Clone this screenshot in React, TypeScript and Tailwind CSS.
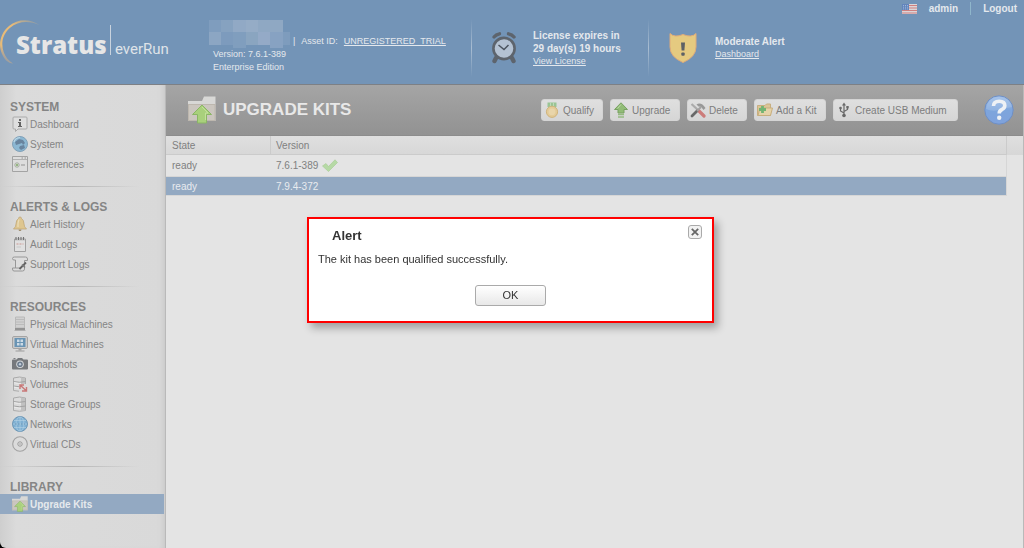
import React, { useState } from 'react';
import clsx from 'clsx';

type IconProps = { className?: string };

/* ---------- header art ---------- */

const Logo = () => (
  <div className="relative flex h-[50px] w-[200px] shrink-0 items-start">
    <svg className="absolute left-0 top-0" width="44" height="50" viewBox="0 0 44 50" fill="none" aria-hidden="true">
      <defs>
        <linearGradient id="arc" x1="0.9" y1="0" x2="0.2" y2="1">
          <stop offset="0" stopColor="#e3b878" stopOpacity="0.2" />
          <stop offset="0.35" stopColor="#e8bb78" />
          <stop offset="0.8" stopColor="#e8bb78" />
          <stop offset="1" stopColor="#d8ac80" stopOpacity="0.3" />
        </linearGradient>
      </defs>
      <path d="M39.5 6 C30 -0.5 18 -0.5 9 7 C0 14.500 -2 26 2 35 C4 40 8 44.500 13 44.500 C8.500 42 5.500 38 3.800 33.500 C0.800 25 2 16 9.800 9 C18 2 29 1.500 39.500 6Z" fill="url(#arc)" />
    </svg>
    <span className="ml-4 mt-[10px] w-[90px] whitespace-nowrap font-['Open_Sans'] text-[24px] font-extrabold leading-[32px] text-[#e6e6e6]">
      Stratus
    </span>
    <span className="mx-[4px] mt-[6px] h-[30px] w-px bg-[#c9d3de]" />
    <span className="mt-[18px] whitespace-nowrap font-['Roboto'] text-[15px] leading-[24px] text-[#dfe3e8]">everRun</span>
  </div>
);

const Mosaic = () => (
  <svg width="81" height="28" viewBox="0 0 81 28" shapeRendering="crispEdges" aria-hidden="true">
    <path d="M0 0H12V12H0z" fill="#7f9dbe" />
    <path d="M12 0H24V12H12z" fill="#86a2c0" />
    <path d="M24 0H37V12H24z" fill="#91a9c5" />
    <path d="M37 0H49V12H37z" fill="#95acc6" />
    <path d="M49 0H74V12H49z" fill="#8fa8c3" />
    <path d="M0 12H12V25H0z" fill="#8ca6c3" />
    <path d="M12 12H24V25H12z" fill="#7d9bbd" />
    <path d="M24 12H37V28H24z" fill="#809ebe" />
    <path d="M37 12H49V25H37z" fill="#8aa5c0" />
    <path d="M49 12H61V25H49z" fill="#94aac7" />
    <path d="M61 12H74V28H61z" fill="#87a2c2" />
    <path d="M74 12H81V25H74z" fill="#7e9cbd" />
  </svg>
);

const AlarmClock = () => (
  <svg width="26" height="34" viewBox="0 0 26 34" fill="none" aria-hidden="true">
    <path d="M3 6 Q5 3.500 8.500 2.800" stroke="#5d646d" strokeWidth="3.400" strokeLinecap="round" />
    <path d="M23 6 Q21 3.500 17.500 2.800" stroke="#5d646d" strokeWidth="3.400" strokeLinecap="round" />
    <path d="M5 27 L3.500 30 M21 27 L22.500 30" stroke="#5d646d" strokeWidth="4.400" strokeLinecap="round" />
    <circle cx="13" cy="17.500" r="10.600" fill="#b4c2d3" stroke="#5d646d" strokeWidth="2.600" />
    <path d="M7.500 14 L13 18.500 L17.500 14" stroke="#4b545f" strokeWidth="1.500" />
  </svg>
);

const Shield = () => (
  <svg width="28" height="32" viewBox="0 0 28 32" aria-hidden="true">
    <path d="M1 1.500 Q5.500 6 14 2.500 Q22.500 6 27 1.500 V15 Q27 25 14 30.500 Q1 25 1 15Z" fill="#e5ca80" stroke="#dfab7a" strokeWidth="1" />
    <path d="M12 10.500H16L15.400 18.500H12.600Z" fill="#5d6065" />
    <rect x="12.300" y="20.500" width="3.400" height="3.200" rx="1" fill="#5d6065" />
  </svg>
);

const Flag = () => (
  <svg width="15" height="10" viewBox="0 0 15 10" aria-hidden="true">
    <path d="M0 0H15V10H0z" fill="#dcd6d8" />
    <path d="M0 1.500H15M0 4H15M0 6.500H15M0 9H15" stroke="#cf8080" strokeWidth="1.200" />
    <path d="M0 0H7V6H0z" fill="#6285bd" />
    <path d="M1 1.500H6M1 3.200H6M1 4.900H6" stroke="#b9cbe4" strokeWidth="0.700" strokeDasharray="1 1" />
  </svg>
);

/* ---------- sidebar icons, all on a 16px box ---------- */

const Icon16 = ({ children, className }: React.PropsWithChildren<IconProps>) => (
  <svg
    className={clsx('shrink-0 opacity-85', className)}
    width="16"
    height="16"
    viewBox="0 0 16 16"
    fill="none"
    aria-hidden="true"
  >
    {children}
  </svg>
);

const InfoIcon = () => (
  <Icon16>
    <path d="M2 1H14Q15 1 15 2V12Q15 13 14 13H6L3.500 15.500V13H2Q1 13 1 12V2Q1 1 2 1Z" fill="#e0e0e0" stroke="#a2a2a2" />
    <path d="M7 3H9V5H7zM6 6H9V10H10V11H6V10H7V7H6z" fill="#505050" />
  </Icon16>
);

const EarthIcon = () => (
  <Icon16>
    <circle cx="8" cy="8" r="7.500" fill="#7fb2d2" stroke="#7297b2" />
    <path d="M3 6L7 3L11 4L13 7L11 9L10 7L7 8L4 9Z M8 10L12 9L13 12L9 14L7 12Z" fill="#567594" />
    <path d="M2 6Q3 2 8 1.500" stroke="#b8d7e8" strokeWidth="1.200" />
  </Icon16>
);

const PrefsIcon = () => (
  <Icon16>
    <path d="M0.500 0.500H15.500V15.500H0.500Z" fill="#dedede" stroke="#9a9a9a" />
    <path d="M1 3.500H15" stroke="#aaa" />
    <path d="M9.500 2H11M12.500 2H14" stroke="#888" />
    <circle cx="5" cy="9" r="2.200" stroke="#9ba694" />
    <circle cx="5" cy="9" r="1" fill="#6ca14e" />
    <path d="M9 9H13" stroke="#9c9c9c" strokeWidth="1.300" />
  </Icon16>
);

const BellIcon = () => (
  <Icon16>
    <path d="M6.500 2.500Q6.500 1 8 1Q9.500 1 9.500 2.500Q12 4 12 8Q12 11 14.500 13H1.500Q4 11 4 8Q4 4 6.500 2.500Z" fill="#dfc384" stroke="#bda06a" strokeWidth="0.800" />
    <path d="M7 3.500Q5.800 6 6 11" stroke="#eedeb4" strokeWidth="1.200" />
    <path d="M6.500 13.500H9.500L9 15H7Z" fill="#97835f" />
  </Icon16>
);

const NotepadIcon = () => (
  <Icon16>
    <path d="M2.500 3H13.500V15.500H2.500Z" fill="#e2e2e2" stroke="#989898" />
    <path d="M3 4H13" stroke="#bcbcbc" />
    <path d="M4 1V4M6.500 1V4M9 1V4M11.500 1V4" stroke="#606060" strokeWidth="1.100" />
    <path d="M4.500 8H11.500" stroke="#c88b84" strokeDasharray="2 1" />
    <path d="M4.500 11H9" stroke="#c4c4c4" />
  </Icon16>
);

const ScrollIcon = () => (
  <Icon16>
    <path d="M3.500 4H2Q0.500 4 0.500 2.500T2.500 1H13.500Q15.500 1 15.500 3V4.500H12.500V13Q12.500 15 10.500 15H2Q0.500 15 0.500 13V12H3.500Z" fill="#dedede" stroke="#8c8c8c" />
    <path d="M3.500 12H8" stroke="#8c8c8c" />
    <path d="M7.500 13L14 6.500" stroke="#4d4d4d" strokeWidth="1.800" />
    <path d="M10 8.500L13 11.500" stroke="#6d6d6d" strokeWidth="1.600" />
  </Icon16>
);

const ServerIcon = () => (
  <Icon16>
    <path d="M3.500 1H12.500V12H3.500Z" fill="#cfcfcf" stroke="#b4b4b4" />
    <path d="M4 3.500H12M4 6H12M4 8.500H12" stroke="#b6b6b6" />
    <path d="M3 12H13V14H3z" fill="#888" />
    <path d="M2.500 14.500H13.500" stroke="#a9a9a9" />
  </Icon16>
);

const MonitorIcon = () => (
  <Icon16>
    <rect x="0.500" y="0.500" width="15" height="12" rx="1.500" fill="#c8c8c8" stroke="#9b9b9b" />
    <path d="M2.500 2H13.500V11H2.500z" fill="#5688ae" />
    <path d="M5 3.500H7.500V6H5zM8.500 3.500H11V6H8.500zM5 7H7.500V9.500H5zM8.500 7H11V9.500H8.500z" fill="#cbdce9" />
    <path d="M6.500 13H9.500V14.500H6.500z" fill="#9b9b9b" />
    <path d="M3.500 15H12.500" stroke="#929292" />
  </Icon16>
);

const CameraIcon = () => (
  <Icon16>
    <path d="M1 3.500H4.500L6 2H10L11.500 3.500H15Q16 3.500 16 4.500V12.500Q16 13.500 15 13.500H1Q0 13.500 0 12.500V4.500Q0 3.500 1 3.500Z" fill="#65686c" />
    <path d="M1.500 2.500H3.500" stroke="#6c6f73" />
    <circle cx="8" cy="8.200" r="3.800" fill="#d2d5d8" />
    <circle cx="8" cy="8.200" r="2.800" fill="#596a7e" />
    <circle cx="8" cy="8.200" r="1.200" fill="#bacbdc" />
  </Icon16>
);

// two-tone cylinder rack shared by the volume and storage icons
const DiskStack = () => (
  <>
    <path d="M1.500 2Q7.500 0 13.500 2V14.500Q7.500 16 1.500 14.500Z" fill="#dcdcdc" stroke="#a2a2a2" />
    <path d="M9 1.500L13 2V14.500L9 15z" fill="#bdbdbd" />
    <path d="M1.500 5.500Q7.500 7 13.500 5.500M1.500 10Q7.500 11.500 13.500 10" stroke="#999" />
    <path d="M2 6.600Q7.500 8 9 7.800M2 11.100Q7.500 12.500 9 12.300" stroke="#ededed" />
  </>
);

const VolumeIcon = () => (
  <Icon16>
    <DiskStack />
    <path d="M7 8H15V16H7z" fill="#dadada" />
    <path d="M8 9L14.500 15M8 13V9H12M14.500 11V15H10" stroke="#c66767" strokeWidth="1.400" />
  </Icon16>
);

const StorageIcon = () => (
  <Icon16>
    <DiskStack />
  </Icon16>
);

const NetworkIcon = () => (
  <Icon16>
    <circle cx="8" cy="8" r="7.500" fill="#6fa9d2" stroke="#5d8caf" />
    <path d="M8 1V15M1 8H15M2 4.500H14M2 11.500H14" stroke="#a8cde5" strokeWidth="0.700" />
    <ellipse cx="8" cy="8" rx="4" ry="7" stroke="#a8cde5" strokeWidth="0.700" />
    <path d="M3 8H13" stroke="#4d83ad" strokeDasharray="1.500 1.500" />
  </Icon16>
);

const DiscIcon = () => (
  <Icon16>
    <circle cx="8" cy="8" r="7.300" fill="#dcdcdc" stroke="#999" strokeWidth="1.100" />
    <circle cx="8" cy="8" r="2.200" fill="#e8e8e8" stroke="#8c8c8c" />
    <circle cx="8" cy="8" r="0.700" fill="#777" />
  </Icon16>
);

const KitIcon = ({ size }: { size: number }) => (
  <svg className="shrink-0" width={size} height={size} viewBox="0 0 28 28" aria-hidden="true">
    <path d="M0 5H14L16 0.500H27.500V25H0Z" fill="#d8d8d6" />
    <path d="M0 8H27.500V25H0Z" fill="#bdb7ae" />
    <path d="M1 9H26.500V24H1Z" fill="#cbc6bf" />
    <path d="M14 9L23.500 18.500H18.500V27H9.500V18.500H4.500Z" fill="#a9d07c" stroke="#8ab665" />
    <path d="M14 11L20 17H17.500V24" fill="none" stroke="#c4e09b" />
  </svg>
);

/* ---------- toolbar icons ---------- */

const MedalIcon = () => (
  <Icon16>
    <path d="M3.500 0.500H12.500V5H3.500z" fill="#8fc088" />
    <path d="M6.500 0.500V4M9.500 0.500V4" stroke="#b9d9b2" />
    <circle cx="8" cy="9.800" r="5.600" fill="#e6c98c" stroke="#cfae6d" />
    <circle cx="8" cy="9.800" r="3.400" fill="#ecd5a2" />
  </Icon16>
);

const ArrowUpIcon = () => (
  <Icon16>
    <path d="M8 0.800L14.500 7.500H11V11H5V7.500H1.500Z" fill="#85b765" stroke="#68984f" />
    <path d="M5 12.500H11M5 15H11" stroke="#8bb675" strokeWidth="1.500" />
    <path d="M8 2.500L4.500 6.500" stroke="#b7d8a0" />
  </Icon16>
);

const ToolsIcon = () => (
  <Icon16>
    <path d="M1.500 2L8 8" stroke="#a3a3a3" strokeWidth="2.200" />
    <path d="M8.500 8.500L14 14" stroke="#cb6c6a" strokeWidth="3.200" strokeLinecap="round" />
    <path d="M2 14L7 9" stroke="#555" strokeWidth="2.800" strokeLinecap="round" />
    <path d="M7 9L11 5" stroke="#999" strokeWidth="2" />
    <path d="M6.500 2.500Q11 -0.500 15.500 6L13.500 8L11 4.800L8.500 4.500Z" fill="#8d8d8d" />
  </Icon16>
);

const AddFolderIcon = () => (
  <Icon16>
    <path d="M0.500 3.500H8L9.500 2H13.500V13.500H0.500Z" fill="#dcc18b" stroke="#c5a76f" />
    <path d="M3 6H15.500L13.500 13.500H1Z" fill="#e8d2a0" stroke="#c5a76f" />
    <path d="M5.500 4V11M2 7.500H9" stroke="#61ae61" strokeWidth="2.800" />
  </Icon16>
);

const UsbIcon = () => (
  <Icon16>
    <path d="M8 13.500V2.500M8 11L4.500 9V6M8 9.500L11.500 7.500V5" stroke="#555" strokeWidth="1.200" />
    <path d="M8 0.500L10 3.500H6Z" fill="#555" />
    <circle cx="4.500" cy="6" r="1.300" fill="#555" />
    <path d="M10.300 4H12.700V6.400H10.300z" fill="#555" />
    <circle cx="8" cy="13.500" r="1.800" fill="#555" />
  </Icon16>
);

const HelpIcon = () => (
  <svg width="30" height="30" viewBox="0 0 30 30" fill="none" aria-hidden="true">
    <defs>
      <linearGradient id="help" x1="0" y1="0" x2="0" y2="1">
        <stop offset="0" stopColor="#a3c0e8" />
        <stop offset="0.500" stopColor="#7ea5dc" />
        <stop offset="1" stopColor="#7fa2dc" />
      </linearGradient>
    </defs>
    <circle cx="15" cy="15" r="14.200" fill="url(#help)" stroke="#6f8fc4" />
    <path d="M2 14Q8 17 15 15T28 12Q26 2 15 2T2 14Z" fill="#b4cdee" opacity="0.350" />
    <path d="M9.500 11Q9.500 6.200 15.200 6.200Q20.800 6.200 20.800 10.500Q20.800 13 18 14.500Q15.200 15.800 15.200 18.500" stroke="#eef1f5" strokeWidth="3.600" />
    <circle cx="15.200" cy="22.800" r="2.200" fill="#eef1f5" />
  </svg>
);

const CheckIcon = () => (
  <svg width="16" height="13" viewBox="0 0 16 13" aria-hidden="true">
    <path d="M0.500 7L4 4.500L6.500 7.500L13 0.800L15.500 3.500L6.500 12.500Z" fill="#b6d9a5" stroke="#a4cb92" strokeWidth="0.600" />
  </svg>
);

/* ---------- data ---------- */

const sections = [
  {
    title: 'SYSTEM',
    items: [
      { label: 'Dashboard', icon: <InfoIcon /> },
      { label: 'System', icon: <EarthIcon /> },
      { label: 'Preferences', icon: <PrefsIcon /> },
    ],
  },
  {
    title: 'ALERTS & LOGS',
    items: [
      { label: 'Alert History', icon: <BellIcon /> },
      { label: 'Audit Logs', icon: <NotepadIcon /> },
      { label: 'Support Logs', icon: <ScrollIcon /> },
    ],
  },
  {
    title: 'RESOURCES',
    items: [
      { label: 'Physical Machines', icon: <ServerIcon /> },
      { label: 'Virtual Machines', icon: <MonitorIcon /> },
      { label: 'Snapshots', icon: <CameraIcon /> },
      { label: 'Volumes', icon: <VolumeIcon /> },
      { label: 'Storage Groups', icon: <StorageIcon /> },
      { label: 'Networks', icon: <NetworkIcon /> },
      { label: 'Virtual CDs', icon: <DiscIcon /> },
    ],
  },
  {
    title: 'LIBRARY',
    items: [{ label: 'Upgrade Kits', icon: <KitIcon size={16} />, active: true }],
  },
];

const actions = [
  { label: 'Qualify', icon: <MedalIcon />, width: 'w-[62px]' },
  { label: 'Upgrade', icon: <ArrowUpIcon />, width: 'w-[70px]' },
  { label: 'Delete', icon: <ToolsIcon />, width: 'w-[60px]' },
  { label: 'Add a Kit', icon: <AddFolderIcon />, width: 'w-[72px]' },
  { label: 'Create USB Medium', icon: <UsbIcon />, width: 'w-[125px]' },
];

const kits = [
  { state: 'ready', version: '7.6.1-389', qualified: true },
  { state: 'ready', version: '7.9.4-372', selected: true },
];

/* ---------- page parts ---------- */

const HeaderRule = () => (
  <span className="h-[58px] w-px shrink-0 bg-linear-to-b from-transparent via-[#a9bdd2] to-transparent" />
);

const Header = () => (
  <header className="flex h-[85px] shrink-0 items-start border-b border-[#7d8085] bg-[#7394b7] text-[#e4e8ed]">
    <div className="mt-[19px] flex min-w-0 items-start">
      <Logo />
      <div className="ml-[9px] w-[262px] shrink-0 text-[9px] leading-[13px]">
        <div className="flex h-[29px] items-end">
          <Mosaic />
          <span className="ml-[3px] flex gap-[6px] whitespace-nowrap">
            <span>|</span>
            <span>Asset ID:</span>
            <a href="#asset" className="underline">UNREGISTERED_TRIAL</a>
          </span>
        </div>
        <p className="ml-1">Version: 7.6.1-389</p>
        <p className="ml-1">Enterprise Edition</p>
      </div>
      <div className="flex items-center">
        <HeaderRule />
        <div className="ml-[19px] flex w-[157px] items-center gap-4">
          <AlarmClock />
          <div className="whitespace-nowrap text-[10px] font-bold leading-[13px]">
            <p>License expires in</p>
            <p>29 day(s) 19 hours</p>
            <a href="#license" className="block text-[9px] font-normal underline">View License</a>
          </div>
        </div>
        <HeaderRule />
        <div className="ml-5 flex items-center gap-[18px]">
          <Shield />
          <div className="whitespace-nowrap text-[10px] font-bold leading-[13px]">
            <p>Moderate Alert</p>
            <a href="#dashboard" className="block text-[9px] font-normal underline">Dashboard</a>
          </div>
        </div>
      </div>
    </div>
    <nav className="ml-auto mr-[7px] mt-[2px] flex items-center text-[10px] font-bold leading-[13px]">
      <Flag />
      <a href="#admin" className="ml-3">admin</a>
      <span className="mx-3 h-[13px] w-px bg-[#8fb6cb]" />
      <a href="#logout">Logout</a>
    </nav>
  </header>
);

const Sidebar = () => (
  <aside className="w-[165px] shrink-0 rounded-bl-md bg-linear-to-r from-[#cecece] via-[#dbdbdb] via-10% to-[#d9d9d9] pr-px pt-[15px] text-[#858585] shadow-[inset_-6px_0_6px_-5px_#c4c4c4]">
    {sections.map((section, i) => (
      <section key={section.title}>
        {i > 0 && (
          <div className="mb-[13px] mt-3 h-px w-[140px] bg-linear-to-r from-transparent via-[#b4b4b4] to-transparent" />
        )}
        <h2 className="pl-[10px] text-[12px] font-bold leading-[14px]">{section.title}</h2>
        <ul>
          {section.items.map((item) => (
            <li key={item.label}>
              <a
                href="#nav"
                className={clsx(
                  'flex h-5 items-center gap-[2px] pl-3 text-[10px]',
                  'active' in item && 'bg-[#93a9c2] font-bold text-[#e6e9ed]',
                )}
              >
                {item.icon}
                {item.label}
              </a>
            </li>
          ))}
        </ul>
      </section>
    ))}
  </aside>
);

const Toolbar = () => (
  <div className="flex h-[51px] items-center border-b border-[#8c8c8c] bg-linear-to-b from-[#a5a5a5] to-[#929292] pl-[22px] pr-[9px]">
    <KitIcon size={28} />
    <h1 className="ml-[7px] whitespace-nowrap text-[17px] font-bold leading-5 text-[#e8e8e8]">UPGRADE KITS</h1>
    <div className="ml-auto flex gap-[7px]">
      {actions.map((a) => (
        <button
          key={a.label}
          type="button"
          className={clsx(
            'flex h-[22px] items-center gap-[3px] whitespace-nowrap rounded-[3px] border border-[#d4d4d4] bg-linear-to-b from-[#dfdfdf] to-[#d6d6d6] pl-[2px] text-[10px] text-[#7d7d7d]',
            a.width,
          )}
        >
          {a.icon}
          {a.label}
        </button>
      ))}
    </div>
    <button type="button" aria-label="Help" className="ml-[26px] shrink-0">
      <HelpIcon />
    </button>
  </div>
);

const KitTable = () => (
  <div className="bg-[linear-gradient(#dfdfdf,#d7d7d7)] bg-[length:100%_19px] bg-no-repeat pr-[16px]">
    <table className="w-full table-fixed border-separate border-spacing-0 text-left text-[10px] leading-[13px] text-[#808080]">
      <thead>
        <tr className="h-[19px]">
          <th className="w-[105px] border-b border-r border-[#cbcbcb] p-0 pl-[6px] font-normal">State</th>
          <th className="border-b border-r border-[#cbcbcb] p-0 pl-[5px] font-normal">Version</th>
        </tr>
      </thead>
      <tbody>
        {kits.map((kit) => (
          <tr
            key={kit.version}
            className={clsx(kit.selected ? 'h-[19px] bg-[#93a9c2] text-[#e8ebef]' : 'h-[22px]')}
          >
            <td className="border-b border-[#d6d6d6] p-0 pl-[6px]">{kit.state}</td>
            <td className="border-b border-r border-[#d6d6d6] p-0 pl-[5px]">
              <span className="flex items-center gap-1">
                {kit.version}
                {kit.qualified && <CheckIcon />}
              </span>
            </td>
          </tr>
        ))}
      </tbody>
    </table>
  </div>
);

const AlertDialog = ({ onClose }: { onClose: () => void }) => (
  <div className="fixed inset-0 flex items-center justify-center pb-2 pr-[3px]">
    <div
      role="dialog"
      aria-labelledby="alert-title"
      className="w-[407px] border-2 border-[#f00] bg-white px-[9px] pb-[15px] pt-[6px] text-[#333] shadow-[4px_5px_8px_#0000004d]"
    >
      <div className="flex items-start justify-between">
        <h2 id="alert-title" className="pl-[14px] pt-[2px] text-[13px] font-bold leading-[18px]">
          Alert
        </h2>
        <button
          type="button"
          aria-label="Close"
          onClick={onClose}
          className="mr-[1px] flex size-[14px] items-center justify-center rounded-[3px] border border-[#aaa] bg-[#f2f2f2]"
        >
          <svg width="8" height="8" viewBox="0 0 8 8" aria-hidden="true">
            <path d="M0.800 0.800L7.200 7.200M7.200 0.800L0.800 7.200" stroke="#666" strokeWidth="1.800" />
          </svg>
        </button>
      </div>
      <p className="mt-[6px] text-[11px] leading-[16px]">The kit has been qualified successfully.</p>
      <button
        type="button"
        onClick={onClose}
        className="mx-auto mt-[18px] block h-[21px] w-[71px] rounded-[3px] border border-[#aaa] bg-linear-to-b from-white to-[#e8e8e8] text-[11px] leading-[19px]"
      >
        OK
      </button>
    </div>
  </div>
);

const App = () => {
  const [alertOpen, setAlertOpen] = useState(true);

  return (
    <div className="flex min-h-screen flex-col bg-black font-['Liberation_Sans',Arial,sans-serif]">
      <Header />
      <div className="flex flex-1">
        <Sidebar />
        <main className="min-w-0 flex-1 border-x border-[#b9b9b9] bg-[#e4e4e4]">
          <Toolbar />
          <KitTable />
        </main>
      </div>
      {alertOpen && <AlertDialog onClose={() => setAlertOpen(false)} />}
    </div>
  );
};

export default App;
